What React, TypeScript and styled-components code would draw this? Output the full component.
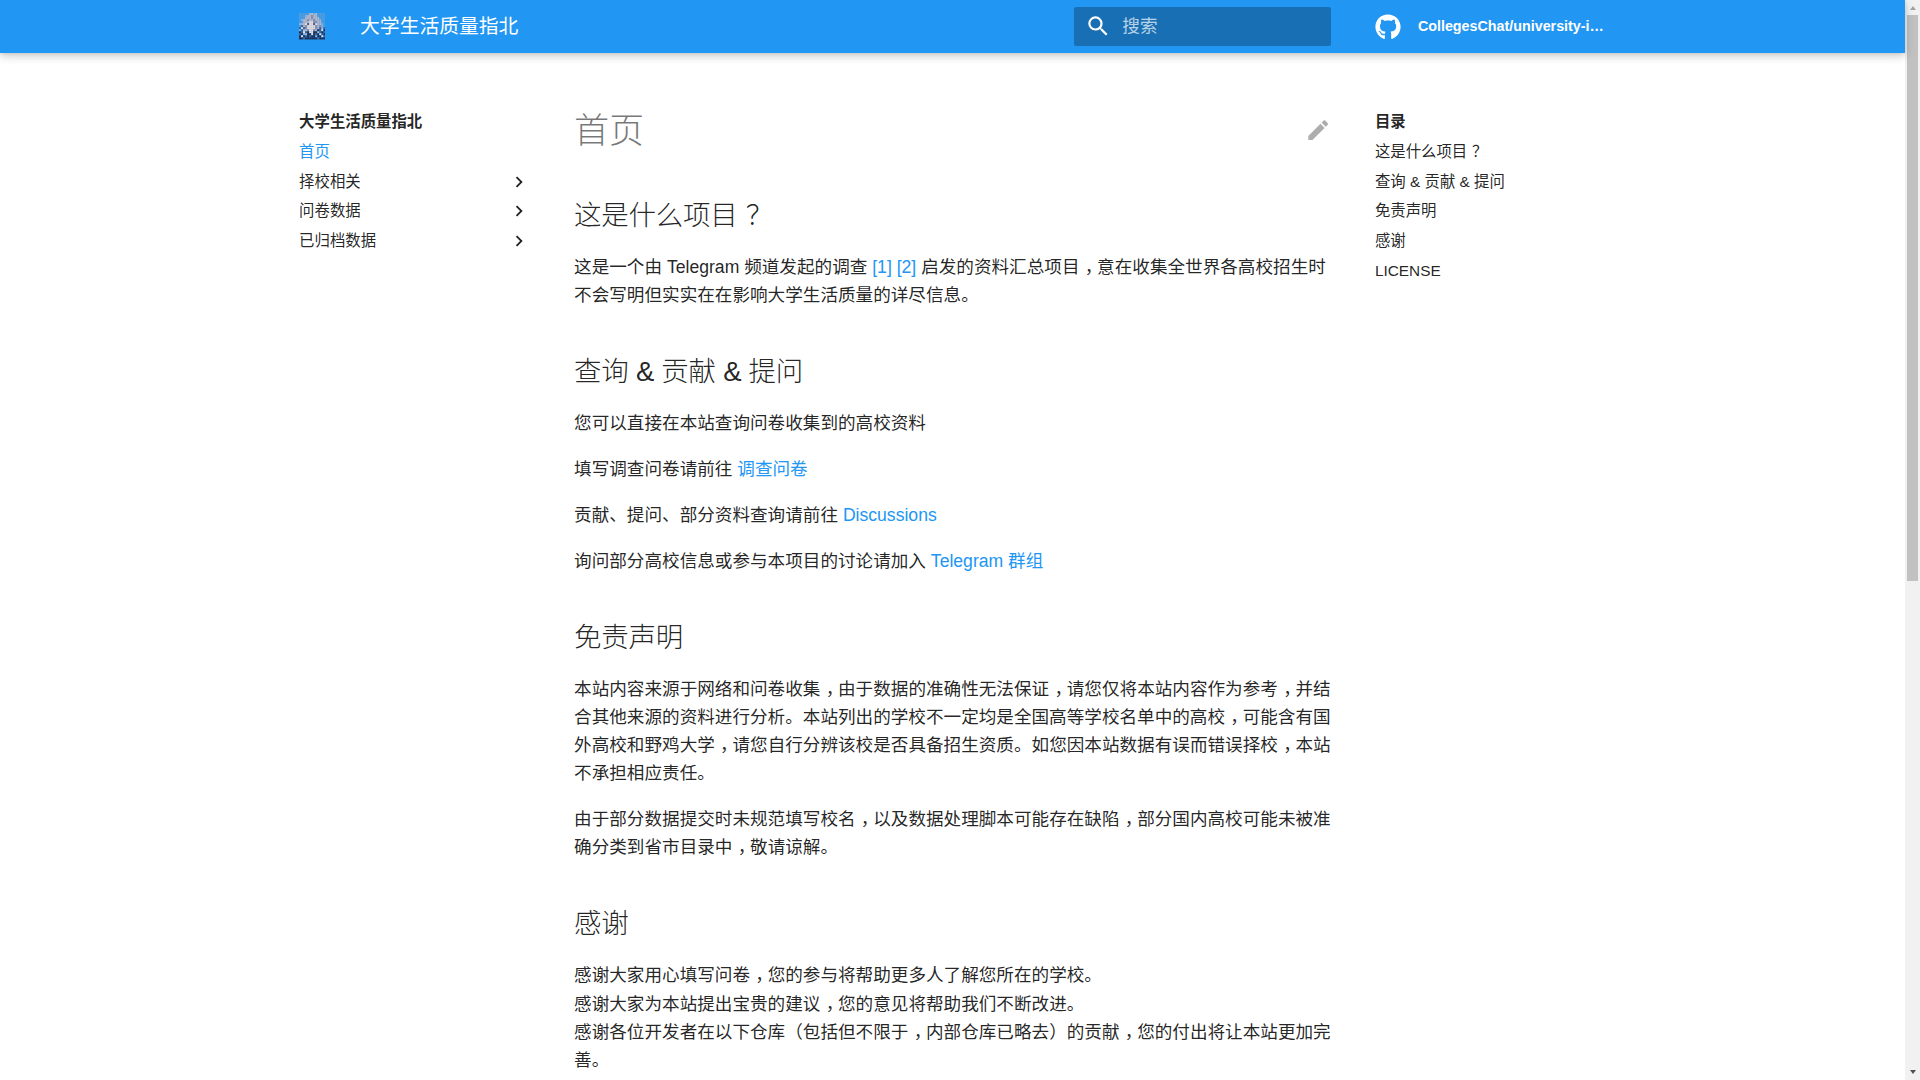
import React from "react";
import styled, { createGlobalStyle } from "styled-components";
import { FaGithub } from "react-icons/fa";

const FONT = `"Liberation Sans", "Noto Sans CJK SC", sans-serif`;

const Global = createGlobalStyle`
  html { font-size: 22px; }
  body { margin: 0; background: #fff; color: rgba(0,0,0,.87); font-family: ${FONT}; }
  * { box-sizing: border-box; }
`;

const Shell = styled.div`
  height: 100vh;
  display: flex;
  overflow: hidden;
`;
const Page = styled.div`
  flex: 1;
  min-width: 0;
  display: flex;
  flex-direction: column;
`;
const ScrollTrack = styled.div`
  width: 15px;
  flex: none;
  display: flex;
  flex-direction: column;
  align-items: center;
  background: #f1f1f1;
`;
const ArrowUp = styled.span`
  flex: none;
  margin: 6px 0 5px;
  border-left: 3.5px solid transparent;
  border-right: 3.5px solid transparent;
  border-bottom: 4px solid #a3a3a3;
`;
const ArrowDown = styled.span`
  flex: none;
  margin: auto 0 6px;
  border-left: 3.5px solid transparent;
  border-right: 3.5px solid transparent;
  border-top: 4px solid #505050;
`;
const ScrollThumb = styled.div`
  width: 11px;
  height: 566px;
  flex: none;
  background: #c1c1c1;
`;
const Header = styled.header`
  position: relative;
  z-index: 2;
  height: 53px;
  flex: none;
  background: #2196f3;
  color: #fff;
  box-shadow: 0 0 .2rem rgba(0,0,0,.1), 0 .2rem .4rem rgba(0,0,0,.2);
`;
const HeaderInner = styled.div`
  max-width: 1342px;
  height: 100%;
  margin: 0 auto;
  padding: 0 17.6px;
  display: flex;
  align-items: center;
`;
const Logo = styled.svg`
  width: 26.4px;
  height: 26.4px;
  flex: none;
`;
const Title = styled.div`
  flex: 1;
  margin-left: 34.6px;
  font-size: 19.8px;
  line-height: 53px;
`;
const Search = styled.label`
  width: 257px;
  height: 39.6px;
  margin-right: 44px;
  padding: 0 10.6px;
  display: flex;
  align-items: center;
  gap: 11.4px;
  border-radius: 2.2px;
  background: rgba(0,0,0,.26);
`;
const SearchIcon = styled.svg`
  width: 26.4px;
  height: 26.4px;
  flex: none;
  fill: #fff;
`;
const SearchInput = styled.input`
  flex: 1;
  min-width: 0;
  border: 0;
  padding: 0;
  background: transparent;
  color: #fff;
  font: 17.6px ${FONT};
  outline: none;
  &::placeholder { color: rgba(255,255,255,.7); opacity: 1; }
`;
const Source = styled.a`
  width: 231px;
  flex: none;
  display: flex;
  align-items: center;
  gap: 17px;
  color: #fff;
  text-decoration: none;
`;
const SourceName = styled.span`
  min-width: 0;
  padding-bottom: 2px;
  overflow: hidden;
  white-space: nowrap;
  text-overflow: ellipsis;
  font-size: 14.3px;
  font-weight: 700;
`;
const Main = styled.main`
  width: 100%;
  max-width: 1342px;
  margin: 0 auto;
  display: flex;
  align-items: flex-start;
`;
const Sidebar = styled.nav`
  width: 266.2px;
  flex: none;
  padding: 58.8px 17.6px 0;
  font-size: 15.4px;
  line-height: 20.02px;
`;
const NavTitle = styled.div`
  padding-bottom: .6px;
  font-weight: 700;
`;
const NavRow = styled.a<{ $active?: boolean }>`
  margin-top: 9.625px;
  display: flex;
  align-items: center;
  justify-content: space-between;
  color: ${(p) => (p.$active ? "#2196f3" : "rgba(0,0,0,.87)")};
  text-decoration: none;
`;
const Chevron = styled.svg`
  width: 22px;
  height: 22px;
  margin: -1px 0;
  flex: none;
  fill: rgba(0,0,0,.87);
`;
const Article = styled.article`
  flex: 1;
  min-width: 0;
  padding: 56.4px 26.4px 0;
  font-size: 17.6px;
  line-height: 28.16px;
`;
const EditIcon = styled.svg`
  float: right;
  width: 26.4px;
  height: 26.4px;
  margin: 7.2px 0 0 8px;
  fill: rgba(0,0,0,.32);
`;
const H1 = styled.h1`
  margin: 0 0 44px;
  font-size: 35.2px;
  line-height: 43.36px;
  font-weight: 300;
  color: rgba(0,0,0,.54);
  letter-spacing: -.01em;
`;
const H2 = styled.h2`
  margin: 44px 0 17.6px;
  font-size: 27.5px;
  line-height: 38.5px;
  font-weight: 300;
  letter-spacing: -.01em;
`;
const P = styled.p`
  margin: 17.6px 0;
`;
const A = styled.a`
  color: #2196f3;
  text-decoration: none;
`;
const Punct = styled.span`
  display: inline-block;
  transform: translateX(.3em);
`;

const zh = (text: string) =>
  text.split(/([，？])/).map((part, i) =>
    part === "，" || part === "？" ? <Punct key={i}>{part}</Punct> : part
  );

const PALETTE: Record<string, string> = {
  k: "#4d9be0", l: "#7fb4e4", w: "#dfe4ee", g: "#b7b5c6", m: "#8f8da6", f: "#efdcd9",
  n: "#1c2a4e", b: "#3b5e94", d: "#5a5a7a",
};
const MOSAIC = [
  "kkkkkgglgkkkk",
  "kkklggmggkkkk",
  "kkkgggmgggkkk",
  "klggmggmgglkk",
  "kkgggffmmggkk",
  "lggfdffdfgglk",
  "kbgmffffmgmlk",
  "bwbmffffmgbgb",
  "lbggmffmgnbwn",
  "nbwbnffnngbnb",
  "bnlgnnwnbnwbn",
  "nwnbnbnnlnnwb",
  "nnbnnnnnnbnnn",
];

const Avatar = () => (
  <Logo viewBox="0 0 13 13" aria-hidden="true">
    {MOSAIC.flatMap((row, y) =>
      row.split("").map((c, x) => (
        <rect key={`${x}-${y}`} x={x} y={y} width="1.02" height="1.02" fill={PALETTE[c]} />
      ))
    )}
  </Logo>
);

const chevron = "M8.59 16.58L13.17 12 8.59 7.41 10 6l6 6-6 6-1.41-1.42z";
const NavItem = ({ label }: { label: string }) => (
  <NavRow>
    {label}
    <Chevron viewBox="0 0 24 24"><path d={chevron} /></Chevron>
  </NavRow>
);

export default function App() {
  return (
    <Shell>
      <Global />
      <Page>
        <Header>
          <HeaderInner>
            <Avatar />
            <Title>大学生活质量指北</Title>
            <Search>
              <SearchIcon viewBox="0 0 24 24">
                <path d="M9.5 3A6.5 6.5 0 0116 9.5c0 1.61-.59 3.09-1.56 4.23l.27.27h.79l5 5-1.5 1.5-5-5v-.79l-.27-.27A6.516 6.516 0 019.5 16 6.5 6.5 0 013 9.5 6.5 6.5 0 019.5 3m0 2C7 5 5 7 5 9.5S7 14 9.5 14 14 12 14 9.5 12 5 9.5 5z" />
              </SearchIcon>
              <SearchInput placeholder="搜索" />
            </Search>
            <Source>
              <FaGithub size={26} style={{ flex: "none" }} />
              <SourceName>CollegesChat/university-information</SourceName>
            </Source>
          </HeaderInner>
        </Header>
        <Main>
          <Sidebar>
            <NavTitle>大学生活质量指北</NavTitle>
            <NavRow $active>首页</NavRow>
            <NavItem label="择校相关" />
            <NavItem label="问卷数据" />
            <NavItem label="已归档数据" />
          </Sidebar>
          <Article>
            <EditIcon viewBox="0 0 24 24">
              <path d="M20.71 7.04c.39-.39.39-1.04 0-1.41l-2.34-2.34c-.37-.39-1.02-.39-1.41 0l-1.84 1.83 3.75 3.75M3 17.25V21h3.75L17.81 9.93l-3.75-3.75L3 17.25z" />
            </EditIcon>
            <H1>首页</H1>
            <H2>{zh("这是什么项目？")}</H2>
            <P>这是一个由 Telegram 频道发起的调查 <A>[1]</A> <A>[2]</A> {zh("启发的资料汇总项目，意在收集全世界各高校招生时不会写明但实实在在影响大学生活质量的详尽信息。")}</P>
            <H2>查询 &amp; 贡献 &amp; 提问</H2>
            <P>您可以直接在本站查询问卷收集到的高校资料</P>
            <P>填写调查问卷请前往 <A>调查问卷</A></P>
            <P>贡献、提问、部分资料查询请前往 <A>Discussions</A></P>
            <P>询问部分高校信息或参与本项目的讨论请加入 <A>Telegram 群组</A></P>
            <H2>免责声明</H2>
            <P>{zh("本站内容来源于网络和问卷收集，由于数据的准确性无法保证，请您仅将本站内容作为参考，并结合其他来源的资料进行分析。本站列出的学校不一定均是全国高等学校名单中的高校，可能含有国外高校和野鸡大学，请您自行分辨该校是否具备招生资质。如您因本站数据有误而错误择校，本站不承担相应责任。")}</P>
            <P>{zh("由于部分数据提交时未规范填写校名，以及数据处理脚本可能存在缺陷，部分国内高校可能未被准确分类到省市目录中，敬请谅解。")}</P>
            <H2>感谢</H2>
            <P>
              {zh("感谢大家用心填写问卷，您的参与将帮助更多人了解您所在的学校。")}<br />
              {zh("感谢大家为本站提出宝贵的建议，您的意见将帮助我们不断改进。")}<br />
              {zh("感谢各位开发者在以下仓库（包括但不限于，内部仓库已略去）的贡献，您的付出将让本站更加完善。")}
            </P>
          </Article>
          <Sidebar>
            <NavTitle>目录</NavTitle>
            <NavRow><span>{zh("这是什么项目？")}</span></NavRow>
            <NavRow>查询 &amp; 贡献 &amp; 提问</NavRow>
            <NavRow>免责声明</NavRow>
            <NavRow>感谢</NavRow>
            <NavRow>LICENSE</NavRow>
          </Sidebar>
        </Main>
      </Page>
      <ScrollTrack>
        <ArrowUp />
        <ScrollThumb />
        <ArrowDown />
      </ScrollTrack>
    </Shell>
  );
}
